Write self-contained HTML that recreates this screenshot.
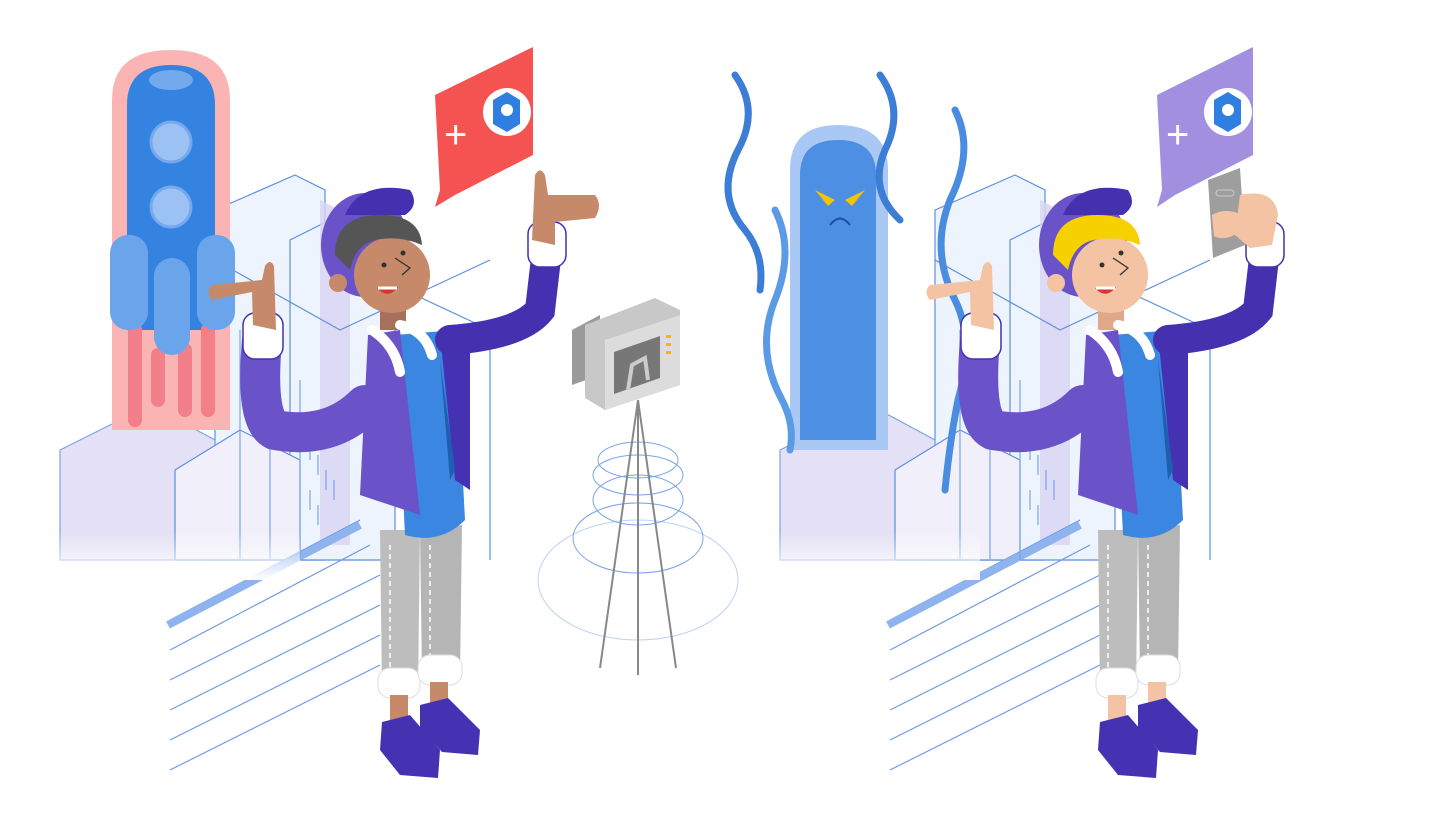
<!DOCTYPE html>
<html><head><meta charset="utf-8"><style>html,body{margin:0;padding:0;background:#fff}svg{display:block}</style></head>
<body>
<svg width="1440" height="836" viewBox="0 0 1440 836" xmlns="http://www.w3.org/2000/svg">
<defs>
<linearGradient id="fade" x1="0" y1="0" x2="0" y2="1"><stop offset="0.7" stop-color="#fff" stop-opacity="0"/><stop offset="1" stop-color="#fff" stop-opacity="1"/></linearGradient>
<g id="city" fill="none" stroke="#5b8fe0" stroke-width="1.2">
<path d="M215 210 L295 175 L325 190 L325 560 L215 560 Z" fill="#eef4fd"/>
<path d="M290 240 L380 195 L395 205 L395 560 L290 560 Z" fill="#eef4fd"/>
<path d="M320 200 L350 215 L350 545 L320 545 Z" fill="#d8d3f2" stroke="none" opacity=".8"/>
<path d="M340 260 L490 330 L490 560"/>
<path d="M215 260 L340 330 L490 260"/>
<path d="M60 450 L150 405 L215 440 L215 560 L60 560 Z" fill="#e4e0f5" stroke="#7aa4e8"/>
<path d="M175 470 L240 430 L300 460 L300 560 L175 560 Z" fill="#f1effa"/>
<path d="M170 620 L360 520 M170 650 L370 545 M170 680 L380 575 M170 710 L380 605 M170 740 L380 635 M170 770 L380 665" stroke="#6f9ae3"/>
<path d="M168 625 L360 525" stroke="#8fb3ef" stroke-width="8"/>
<path d="M240 330 L240 560 M270 330 L270 560 M300 380 V560" stroke="#7aa4e8"/>
<path d="M310 440 v20 M318 455 v20 M326 470 v20 M310 490 v20 M318 505 v20 M334 480 v20" stroke="#7aa4e8"/>
</g>
<g id="person">
<path d="M380 530 L420 530 L418 690 L382 690 Z" fill="#bdbdbd"/>
<path d="M420 530 L462 525 L460 675 L422 675 Z" fill="#b5b5b5"/>
<path d="M390 545 V680 M430 545 V665" stroke="#fff" stroke-width="1.5" stroke-dasharray="5 4"/>
<rect x="378" y="668" width="42" height="30" rx="12" fill="#fff" stroke="#ddd"/>
<rect x="418" y="655" width="44" height="30" rx="12" fill="#fff" stroke="#ddd"/>
<rect x="390" y="695" width="18" height="28" style="fill:var(--skin)"/>
<rect x="430" y="682" width="18" height="24" style="fill:var(--skin)"/>
<path d="M382 722 L410 715 L440 750 L438 778 L400 775 L380 750 Z" fill="#4532b3"/>
<path d="M420 705 L448 698 L480 730 L478 755 L442 752 L420 728 Z" fill="#4532b3"/>
<path d="M395 335 L455 330 L465 520 Q440 545 405 535 Z" fill="#3a86e0"/>
<path d="M440 335 L470 345 L470 490 L455 480 Z" fill="#4532b3"/>
<path d="M440 360 L455 470 L450 480 Z" fill="#1f5fb0"/>
<path d="M368 335 L400 330 L420 515 L360 495 Z" fill="#6a52c9"/>
<path d="M450 340 Q520 335 540 310 L547 250" fill="none" stroke="#4530b0" stroke-width="30" stroke-linecap="round"/>
<rect x="528" y="222" width="38" height="45" rx="12" fill="#fff" stroke="#4530b0" stroke-width="1.5"/>
<path d="M365 405 Q330 440 275 430 Q255 420 262 340" fill="none" stroke="#6a52c9" stroke-width="40" stroke-linecap="round"/>
<rect x="243" y="313" width="40" height="46" rx="12" fill="#fff" stroke="#4530b0" stroke-width="1.5"/>
<path d="M253 325 L252 292 L212 300 Q205 292 212 285 L262 280 L265 266 Q270 258 274 266 L276 330 Z" style="fill:var(--skin)"/>
<rect x="380" y="300" width="26" height="30" style="fill:var(--neck)"/>
<path d="M372 330 Q395 345 400 372 M400 325 Q425 330 432 355" fill="none" stroke="#fff" stroke-width="10" stroke-linecap="round"/>
<ellipse cx="365" cy="245" rx="44" ry="52" fill="#6a52c9"/>
<path d="M345 215 Q360 180 410 190 Q420 205 405 215 Z" fill="#4530b0"/>
<circle cx="392" cy="275" r="38" style="fill:var(--skin)"/>
<path d="M335 255 Q335 215 380 215 Q420 215 422 245 Q400 235 375 240 Q355 245 350 270 Z" style="fill:var(--hair)"/>
<circle cx="338" cy="283" r="9" style="fill:var(--skin)"/>
<circle cx="384" cy="265" r="2.5" fill="#333"/><circle cx="403" cy="253" r="2.5" fill="#333"/>
<path d="M395 258 L410 268 L402 275" fill="none" stroke="#333" stroke-width="1.3"/>
<path d="M377 288 Q388 300 398 287 Z" fill="#d33"/>
<path d="M378 288 H397" stroke="#fff" stroke-width="3"/>
</g>
</defs>

<use href="#city"/>
<path d="M112 100 Q112 50 171 50 Q230 50 230 100 L230 430 L112 430 Z" fill="#fbb4b4"/>
<path d="M127 105 Q127 65 171 65 Q215 65 215 105 L215 330 L127 330 Z" fill="#3583e0"/>
<ellipse cx="171" cy="80" rx="22" ry="10" fill="#74a9ee"/>
<circle cx="171" cy="142" r="20" fill="#9cc1f3" stroke="#74a9ee" stroke-width="3"/>
<circle cx="171" cy="207" r="20" fill="#9cc1f3" stroke="#74a9ee" stroke-width="3"/>
<path d="M135 330 V420 M158 355 V400 M185 350 V410 M208 330 V410" stroke="#f27f8a" stroke-width="14" stroke-linecap="round"/>
<rect x="110" y="235" width="38" height="95" rx="18" fill="#6aa5ec"/>
<rect x="154" y="258" width="36" height="97" rx="18" fill="#6aa5ec"/>
<rect x="197" y="235" width="38" height="95" rx="18" fill="#6aa5ec"/>
<rect x="40" y="420" width="260" height="160" fill="url(#fade)"/>

<path d="M435 95 L533 47 L533 155 L455 195 L435 207 L440 190 Z" fill="#f55252"/>
<text x="444" y="148" font-family="Liberation Sans, sans-serif" font-size="40" fill="#fff">+</text>
<circle cx="507" cy="112" r="24" fill="#fff"/>
<path d="M493 100 L507 92 L520 100 L520 124 L507 132 L493 124 Z" fill="#2f7fe0"/>
<circle cx="507" cy="110" r="6" fill="#fff"/>

<g fill="none" stroke="#7aa4e8" stroke-width="1">
<ellipse cx="638" cy="580" rx="100" ry="60" stroke="#bcd2f5"/>
<ellipse cx="638" cy="538" rx="65" ry="35"/>
<ellipse cx="638" cy="500" rx="45" ry="25"/>
<ellipse cx="638" cy="475" rx="45" ry="20"/>
<ellipse cx="638" cy="460" rx="40" ry="18"/>
</g>
<path d="M638 400 L600 668 M638 400 L638 675 M638 400 L676 668" stroke="#888" stroke-width="2"/>
<path d="M572 330 L600 315 L600 375 L572 385 Z" fill="#9a9a9a"/>
<path d="M585 325 L655 298 L680 310 L680 385 L605 410 L585 398 Z" fill="#c8c8c8"/>
<path d="M605 340 L680 315 L680 385 L605 410 Z" fill="#dcdcdc"/>
<path d="M614 352 L660 336 L660 378 L614 394 Z" fill="#777"/>
<path d="M628 390 L632 365 L645 358 L648 380" fill="none" stroke="#ccc" stroke-width="4"/>
<rect x="666" y="335" width="5" height="3" fill="#f5b800"/><rect x="666" y="343" width="5" height="3" fill="#f5b800"/><rect x="666" y="351" width="5" height="3" fill="#f5b800"/>

<use href="#person" style="--skin:#c68a6b;--hair:#555;--neck:#a8705a"/>
<path d="M532 240 L535 175 Q540 166 545 175 L548 195 L595 195 Q603 205 595 218 L555 222 L555 245 Z" fill="#c68a6b"/>

<g transform="translate(720 0)"><use href="#city"/></g>
<path d="M790 170 Q790 125 838 125 Q888 125 888 170 L888 450 L790 450 Z" fill="#a9c8f3"/>
<path d="M800 175 Q800 140 838 140 Q876 140 876 175 L876 440 L800 440 Z" fill="#4d8fe3"/>
<path d="M815 190 L835 200 L828 206 Z M865 190 L845 200 L852 206 Z" fill="#f5c400"/>
<path d="M830 225 Q840 212 850 225" stroke="#1d4fa8" stroke-width="2" fill="none"/>
<g fill="none" stroke-linecap="round" stroke-width="7">
<path d="M735 75 Q760 110 738 150 Q715 195 745 230 Q765 255 760 290" stroke="#3c7dd5"/>
<path d="M775 210 Q795 250 775 300 Q755 350 782 400 Q795 425 790 450" stroke="#5b9ae5"/>
<path d="M880 75 Q905 110 885 150 Q868 190 900 220" stroke="#3c7dd5"/>
<path d="M955 110 Q975 150 950 200 Q930 250 955 300 Q975 340 958 400 Q950 440 945 490" stroke="#4a8de0"/>
</g>
<rect x="760" y="420" width="220" height="160" fill="url(#fade)"/>

<path d="M1157 95 L1253 47 L1253 155 L1175 195 L1157 207 L1162 190 Z" fill="#a38fe0"/>
<text x="1166" y="148" font-family="Liberation Sans, sans-serif" font-size="40" fill="#fff">+</text>
<circle cx="1228" cy="112" r="24" fill="#fff"/>
<path d="M1214 100 L1228 92 L1241 100 L1241 124 L1228 132 L1214 124 Z" fill="#2f7fe0"/>
<circle cx="1228" cy="110" r="6" fill="#fff"/>

<g transform="translate(718 0)">
<use href="#person" style="--skin:#f3c3a3;--hair:#f7d000;--neck:#e0a888"/>
</g>
<path d="M1208 180 L1240 168 L1245 245 L1213 258 Z" fill="#9e9e9e"/>
<rect x="1216" y="190" width="18" height="6" rx="3" fill="none" stroke="#ccc"/>
<path d="M1240 195 Q1275 188 1278 215 L1272 245 L1250 248 L1235 235 Z" fill="#f3c3a3"/>
<path d="M1212 215 Q1226 207 1242 215 L1240 232 Q1224 242 1214 236 Z" fill="#f3c3a3"/>
</svg>
</body></html>
